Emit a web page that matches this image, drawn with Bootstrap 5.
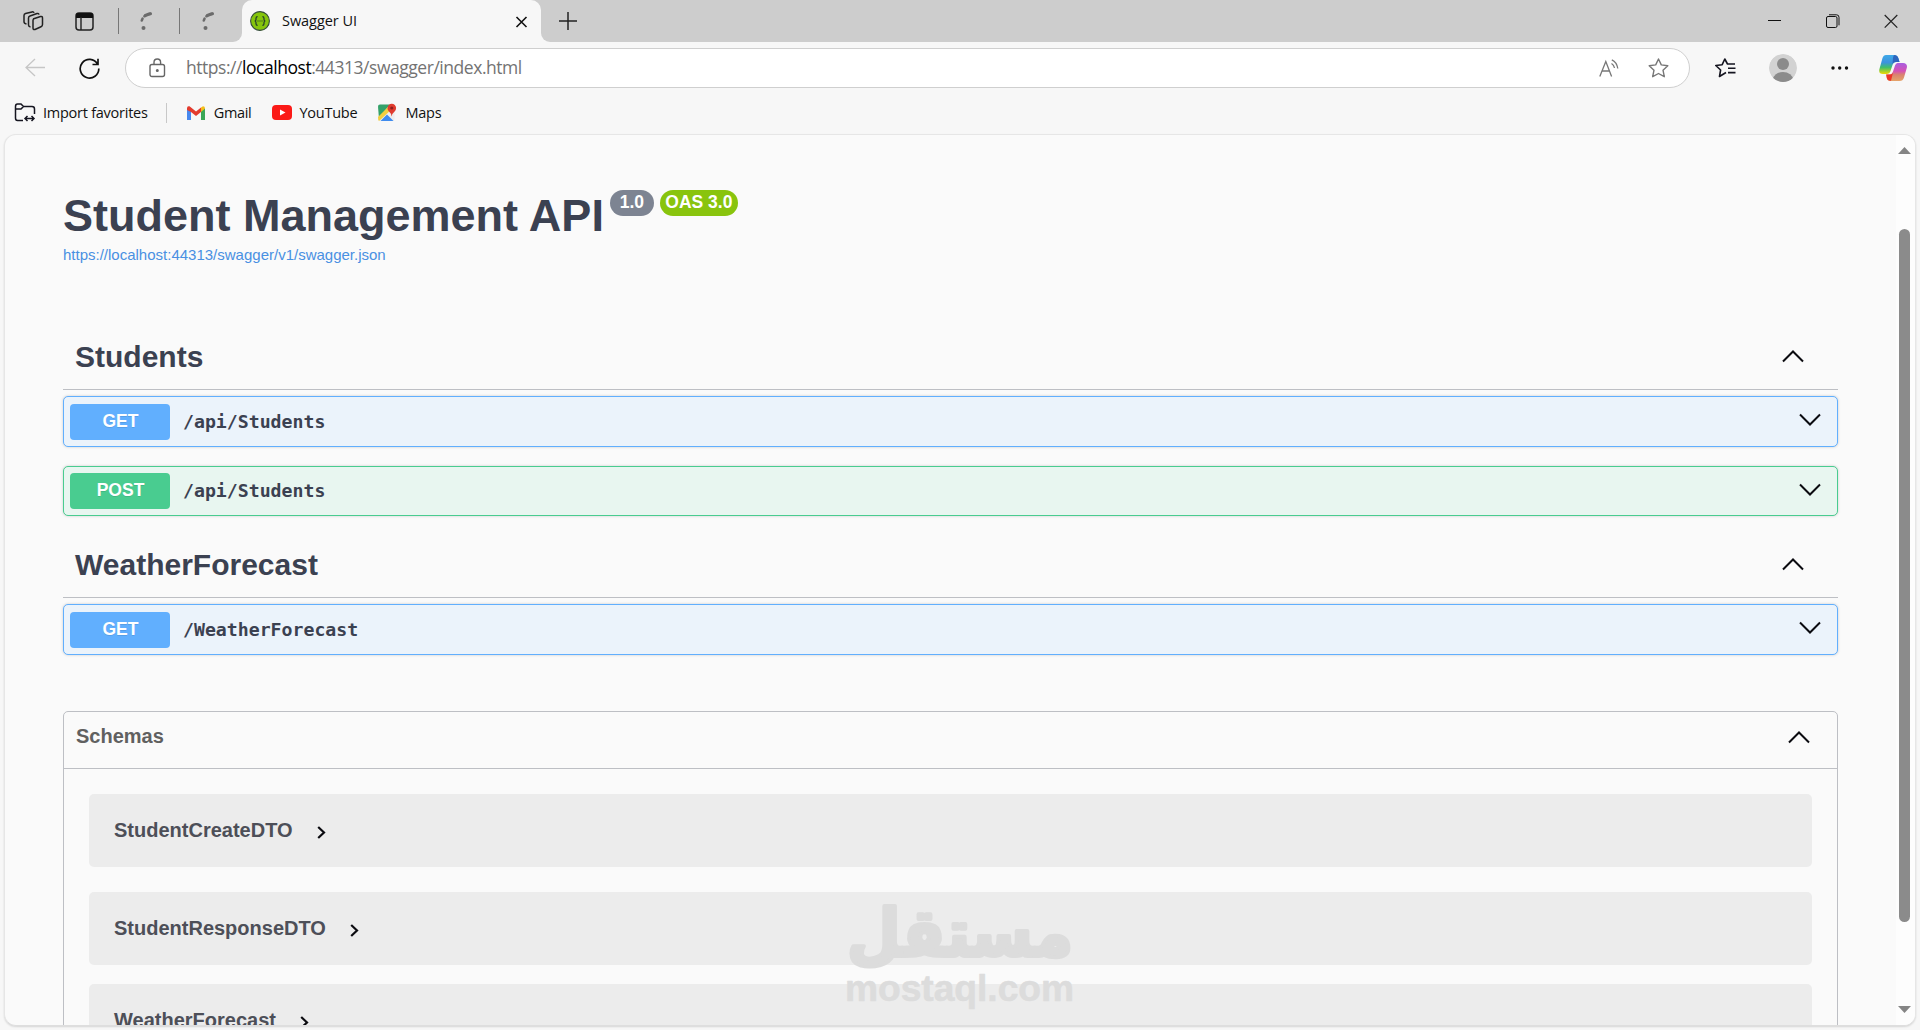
<!DOCTYPE html>
<html lang="en">
<head>
<meta charset="utf-8">
<title>Swagger UI</title>
<meta name="viewport" content="width=device-width, initial-scale=1">
<link href="https://cdn.jsdelivr.net/npm/bootstrap@5.3.0/dist/css/bootstrap.min.css" rel="stylesheet">
<style>
body{height:1030px;overflow:hidden;background:#f7f7f7;font-family:"Open Sans","Noto Sans",sans-serif;color:#111;line-height:1.2}
svg{display:block;flex:none}
.tabstrip{height:42px;background:#cdcdcd}
.strip-left{width:242px;background:#cdcdcd;border-bottom-right-radius:9px;padding-left:22px}
.strip-left .vr{width:1px;height:26px;background:#777;opacity:1;align-self:center}
.strip-bed{background:#f7f7f7}
.tab-active{width:299px;background:#f7f7f7;border-radius:10px 10px 0 0;padding:0 13px 0 8px}
.tab-title{font-size:14.5px;letter-spacing:-.05px;margin-left:12px}
.strip-right{background:#cdcdcd;border-bottom-left-radius:9px;padding-left:18px;padding-right:22px}
.toolbar{height:52px}
.address{width:1565px;height:40px;background:#fff;border:1px solid #cfcfcf;border-radius:20px;padding:0 20px 0 23px}
.url{font-size:17.5px;color:#737373;letter-spacing:-.46px;margin-left:20px;margin-bottom:2px}
.url b{font-weight:400;color:#000}
.favbar{height:40px;padding:0 0 3px 14px;font-size:14.5px}
.favbar .vr{width:1px;height:20px;background:#c8c8c8;opacity:1;align-self:center}
.page-frame{height:892px;margin:0 4px 0 4px;border:1px solid #e6e6e6;border-bottom:1px solid #dedede;border-radius:12px;background:#fafafa;overflow:hidden;box-shadow:0 1px 2px #0002}
.api-page{padding:54px 58px 0 58px;font-family:"Liberation Sans",Arial,sans-serif;color:#3b4151;overflow:hidden}
.scroll-rail{width:19px;background:#fdfdfd;padding:12px 2px 12px 0}
.scroll-thumb{width:11px;height:693px;border-radius:6px;background:#8b8b8b;margin-top:75px}
.api-title{font-size:45px;font-weight:700;line-height:54px;color:#3b4151;margin:0}
.pill{font-size:17.5px;font-weight:700;line-height:24px;height:26px;border-radius:13px;color:#fff;margin-top:1px;padding:0 5px}
.pill-version{background:#7d8492;margin-left:6px;width:44px;text-align:center}
.pill-oas{background:#89c40d;margin-left:6px;width:78px;text-align:center;white-space:nowrap}
.spec-link{font-size:15px;line-height:18px;color:#4990e2;text-decoration:none;margin-top:3px}
.tag-head{height:64px;border-bottom:1px solid #bdbfc4;padding:0 34px 1px 12px}
.tag-head h3{font-size:30px;font-weight:700;line-height:36px;margin:0}
.tag-head svg{margin-bottom:1px}
.op{height:51px;border:1px solid;border-radius:5px;padding:0 16px 0 6px;box-shadow:0 0 3px rgba(0,0,0,.19)}
.op-get{border-color:#61affe;background:#ebf3fb}
.op-post{border-color:#49cc90;background:#e8f6f0}
.method{width:100px;height:36px;border-radius:4px;color:#fff;font-size:17.5px;font-weight:700;line-height:34px;text-align:center;text-shadow:0 1px 0 rgba(0,0,0,.1);padding-left:1px}
.op-get .method{background:#61affe}
.op-post .method{background:#49cc90}
.op-path{font-family:"DejaVu Sans Mono",monospace;font-weight:700;font-size:18.2px;margin-left:13px}
.models{border:1px solid #bdbfc4;border-radius:5px;margin-top:56px;height:360px}
.models-head{height:57px;border-bottom:1px solid #bdbfc4;padding:0 27px 8px 12px;font-size:20px;font-weight:700;color:#606060}
.models-head svg{margin-top:2px}
.models-body{padding:25px 25px 0}
.model-row{height:73px;background:#ececec;border-radius:5px;padding:0 25px;font-size:20px;font-weight:700;color:#4d4f58}
.model-row span{margin-bottom:2px}
.model-row svg{margin:3px 0 0 24px}
.watermark{position:absolute;left:843px;top:896px}
</style>
<script src="https://cdn.jsdelivr.net/npm/bootstrap@5.3.0/dist/js/bootstrap.bundle.min.js"></script>
</head>
<body class="d-flex flex-column position-relative">

<svg width="0" height="0" class="position-absolute">
  <symbol id="up" viewBox="0 0 22 13"><path d="M1 11.5 11 1.5l10 10" fill="none" stroke="#0b0b10" stroke-width="2"/></symbol>
  <symbol id="down" viewBox="0 0 22 13"><path d="M1 1.500 11 11.500l10-10" fill="none" stroke="#0b0b10" stroke-width="2"/></symbol>
  <symbol id="next" viewBox="0 0 9 13"><path d="M1.200 1 7 6.500l-5.800 5.500" fill="none" stroke="#0b0b10" stroke-width="2.200"/></symbol>
  <symbol id="spin" viewBox="0 0 14 20"><path d="M2.800 9.500Q4.500 3.800 11 2.800" fill="none" stroke="#6b6b6b" stroke-width="2.600" stroke-linecap="round" stroke-dasharray="1.800 3.200"/><path d="M6.500 4.600Q8.500 3.200 11.500 2.700" fill="none" stroke="#6b6b6b" stroke-width="3" stroke-linecap="round"/><circle cx="4.500" cy="17" r="2" fill="#6b6b6b"/></symbol>
</svg>

<header class="flex-shrink-0">
  <div class="tabstrip d-flex">
    <div class="strip-bed"><div class="strip-left h-100 d-flex align-items-center">
      <svg width="23" height="20" viewBox="0 0 23 20" fill="none" stroke="#222" stroke-width="1.500" stroke-linejoin="round"><path d="M11 8 18.500 5.500Q20.500 5 20.500 7v6.500q0 1.500-1.500 2.200l-6 2.800q-2 .5-2-1.500V9.500Q11 8.300 12 7.700M8.500 16q-2-.3-2-2V7Q6.500 5.500 8 5l7-2.500q1.800-.4 2 1.200M4.500 13q-2.500-.5-2.500-2.200V4.500Q2 3 3.500 2.500L10 .9q1.700-.2 2 1"/></svg>
      <svg class="ms-auto" width="19" height="19" viewBox="0 0 19 19"><rect x="1" y="1" width="17" height="17" rx="3" fill="none" stroke="#222" stroke-width="1.500"/><path d="M1 6V3q0-2 2-2h13q2 0 2 2v3z" fill="#111"/><path d="M6 5v13" stroke="#222" stroke-width="1.400"/></svg>
      <div class="vr" style="margin-left:24px"></div>
      <svg width="14" height="20" style="margin-left:20px"><use href="#spin"/></svg>
      <div class="vr" style="margin-left:26px"></div>
      <svg width="14" height="20" style="margin-left:21px;margin-right:27px"><use href="#spin"/></svg>
    </div></div>
    <div><div class="tab-active h-100 d-flex align-items-center">
      <svg width="20" height="20" viewBox="0 0 20 20"><circle cx="10" cy="10" r="9.400" fill="#85c50c" stroke="#334b3c" stroke-width="1.100"/><path d="M7.600 5.600q-1.600 0-1.600 1.600v1.200q0 1.400-1.300 1.600 1.300.2 1.300 1.600v1.200q0 1.600 1.600 1.600m4.800-8.800q1.600 0 1.600 1.600v1.200q0 1.400 1.300 1.600-1.300.2-1.300 1.600v1.200q0 1.600-1.600 1.600" fill="none" stroke="#20392b" stroke-width="1.200"/><path d="M7.500 10h1m1 0h1m1 0h1" stroke="#20392b" stroke-width="1.200"/></svg>
      <span class="tab-title">Swagger UI</span>
      <svg class="ms-auto" width="13" height="13" viewBox="0 0 13 13"><path d="m1.500 2 10 10m0-10-10 10" stroke="#111" stroke-width="1.600"/></svg>
    </div></div>
    <div class="strip-bed flex-grow-1"><div class="strip-right h-100 d-flex align-items-center">
      <svg width="18" height="18" viewBox="0 0 18 18"><path d="M9 0v18M0 9h18" stroke="#222" stroke-width="1.500"/></svg>
      <svg class="ms-auto" width="14" height="14" viewBox="0 0 14 14"><path d="M0 6.500h13" stroke="#111"/></svg>
      <svg width="14" height="14" viewBox="0 0 14 14" fill="none" stroke="#111" style="margin-left:44px"><rect x=".5" y="2.500" width="10.500" height="11" rx="1.500"/><path d="M3 .8h7.500q2.500 0 2.500 2.500v8"/></svg>
      <svg width="14" height="14" viewBox="0 0 14 14" style="margin-left:44px"><path d="m.7 1 12.600 12.600m0-12.600L.7 13.600" stroke="#222" stroke-width="1.200"/></svg>
    </div></div>
  </div>

  <div class="toolbar d-flex align-items-center">
    <svg width="21" height="19" viewBox="0 0 21 19" style="margin:0 0 1px 25px"><path d="M20 9.500H1M10 1 1 9.500l9 8.500" fill="none" stroke="#c6c6c6" stroke-width="1.300"/></svg>
    <svg width="21" height="21" viewBox="0 0 21 21" style="margin-left:33px"><path d="M18.500 6A9.300 9.300 0 1 0 19.800 10.500M19 .8V6.500h-5.500" fill="none" stroke="#111" stroke-width="1.700"/></svg>
    <div class="address d-flex align-items-center" style="margin-left:25px">
      <svg width="17" height="20" viewBox="0 0 17 20" fill="none" stroke="#666" stroke-width="1.400"><rect x="1" y="6.500" width="14.500" height="12" rx="2"/><path d="M5 6.500V4.500q0-3.500 3.300-3.500t3.300 3.500v2"/><circle cx="8.300" cy="12.500" r=".8" fill="#666"/></svg>
      <span class="url">https://<b>localhost</b>:44313/swagger/index.html</span>
      <svg class="ms-auto" width="20" height="19" viewBox="0 0 20 19" fill="none" stroke="#777" stroke-width="1.300"><path d="M.8 17.500 6.800 2.500l5.800 15M2.800 12h7.900M12.500 4.500q2.500 1.500 3 4.500M12.800.8q5 2.200 6 8.700"/></svg>
      <svg width="21" height="20" viewBox="0 0 21 20" style="margin-left:29px"><path d="m10.500 1 2.800 5.900 6.500.8-4.800 4.500 1.300 6.500-5.800-3.200-5.800 3.200 1.300-6.500-4.800-4.500 6.500-.8z" fill="none" stroke="#777" stroke-width="1.400" stroke-linejoin="round"/></svg>
    </div>
    <svg width="21" height="20" viewBox="0 0 21 20" style="margin-left:25px" fill="none" stroke="#151520" stroke-width="1.600" stroke-linejoin="round"><path d="M11 14.500 4.500 18.500 5.600 12 .8 7.500l6.400-.8L9.800 1l2.700 5H20M13 10.200h7.500M13 14.600h7.500"/></svg>
    <svg width="28" height="28" viewBox="0 0 28 28" style="margin-left:33px"><defs><clipPath id="av"><circle cx="14" cy="14" r="14"/></clipPath></defs><g clip-path="url(#av)"><circle cx="14" cy="14" r="14" fill="#d2d2d2"/><circle cx="14" cy="10" r="6" fill="#8b8b8b"/><ellipse cx="14" cy="25.500" rx="10" ry="7.500" fill="#8b8b8b"/></g></svg>
    <svg width="18" height="4" viewBox="0 0 18 4" style="margin-left:34px"><g fill="#111"><circle cx="2" cy="2" r="1.700"/><circle cx="8.700" cy="2" r="1.700"/><circle cx="15.500" cy="2" r="1.700"/></g></svg>
    <svg width="28" height="26" viewBox="0 0 28 26" style="margin-left:30px">
      <defs><linearGradient id="cl" x1="0" y1="0" x2="0" y2="1"><stop offset="0" stop-color="#3fa9e8"/><stop offset=".4" stop-color="#3c93dd"/><stop offset=".65" stop-color="#3ebf6b"/><stop offset="1" stop-color="#f0d800"/></linearGradient><linearGradient id="cr" x1="0" y1="0" x2="0" y2="1"><stop offset="0" stop-color="#a85ee0"/><stop offset=".45" stop-color="#d651b5"/><stop offset=".65" stop-color="#d98370"/><stop offset="1" stop-color="#e5a469"/></linearGradient></defs>
      <path d="M7 0h8q3.500 0 4.500 3.500L20.500 7H17q-2.500 0-3.500 3l-2 6q-.8 3-4 3H4q-4.500 0-3.700-4.500L3.500 3Q4.500 0 7 0z" fill="url(#cl)"/>
      <path d="M15 0q3.500 0 4.300 3L20.500 7H17q-2.500 0-3.500 2l.5-6q.3-2 1-3z" fill="#2e66bd"/>
      <path d="M18.500 8H24q4.500 0 3.900 4.500L25 22.500Q24 26 20.500 26H11q-2.500 0-3.200-3L7 19.500h3.500q2.500 0 3.500-3l2-6q.8-2.500 2.500-2.500z" fill="url(#cr)"/>
      <path d="M7.300 19.500h4q2 0 2.700-2L12 25.700Q8.500 26 7.800 23z" fill="#ee3428"/>
    </svg>
  </div>

  <nav class="favbar d-flex align-items-center">
    <svg width="22" height="19" viewBox="0 0 22 19" fill="none" stroke="#151520" stroke-width="1.500" style="margin-bottom:1px"><path d="M9 17.500H3.500Q1.500 17.500 1.500 15V3.500Q1.500 1 3.500 1H7l2.500 2.500H18q2.500 0 2.500 2.500v5M1.500 6H7l2.500-2.500M11 15.500h9M13.500 13 11 15.500l2.500 2.500M17.500 13l2.500 2.500-2.500 2.500"/></svg>
    <span style="margin-left:7px;letter-spacing:-.25px">Import favorites</span>
    <div class="vr" style="margin-left:18px"></div>
    <svg width="18" height="14" viewBox="0 0 18 14" style="margin-left:20px"><path d="M0 2v12h4V5z" fill="#4788ee"/><path d="M14 5v9h4V2z" fill="#3aa757"/><path d="m14 1.500 2-1.300q2 0 2 2.300L14 6z" fill="#f5bd18"/><path d="M0 2.500Q0-.5 2.500.3L9 5.500l5-4V6L9 10 4 6 0 4z" fill="#e33b2e"/></svg>
    <span style="margin-left:9px;letter-spacing:-.3px">Gmail</span>
    <svg width="20" height="15" viewBox="0 0 20 15" style="margin-left:20px"><rect width="20" height="15" rx="4" fill="#fb1a17"/><path d="m8 4.500 5.500 3L8 10.500z" fill="#fff"/></svg>
    <span style="margin-left:8px;letter-spacing:-.25px">YouTube</span>
    <svg width="19" height="19" viewBox="0 0 19 19" style="margin-left:21px;margin-top:-1px"><rect y="1.500" width="16.500" height="16.500" rx="2" fill="#eee"/><path d="M0 3.500q0-2 2-2h10L1 15z" fill="#34a26a"/><path d="M0 14 12 2l2 4L1 18q-1-1-1-4z" fill="#f3cf3f"/><path d="m2.500 18 6.500-6.500 6.500 6.500z" fill="#3f8bee"/><path d="M13.500 13.500q0-3-2.500-5-1.500-1.500-1.500-3.500a4.300 4.300 0 0 1 8.600 0q0 2-1.500 3.500-2.500 2-3.100 5z" fill="#e03c2f"/><circle cx="13.800" cy="5" r="1.600" fill="#8e1e1e"/></svg>
    <span style="margin-left:8px;letter-spacing:-.2px">Maps</span>
  </nav>
</header>

<div class="page-frame d-flex flex-shrink-0">
  <main class="api-page flex-grow-1">
    <div class="d-flex align-items-start">
      <h1 class="api-title">Student Management API</h1>
      <span class="pill pill-version">1.0</span>
      <span class="pill pill-oas">OAS 3.0</span>
    </div>
    <a class="spec-link d-block" href="#">https://localhost:44313/swagger/v1/swagger.json</a>

    <section style="margin-top:62px">
      <div class="tag-head d-flex align-items-center"><h3>Students</h3><svg class="ms-auto" width="22" height="13"><use href="#up"/></svg></div>
      <div class="op op-get d-flex align-items-center" style="margin-top:6px"><span class="method">GET</span><span class="op-path">/api/Students</span><svg class="ms-auto mb-1" width="22" height="13"><use href="#down"/></svg></div>
      <div class="op op-post d-flex align-items-center" style="margin-top:19px;height:50px"><span class="method">POST</span><span class="op-path">/api/Students</span><svg class="ms-auto mb-1" width="22" height="13"><use href="#down"/></svg></div>
    </section>
    <section style="margin-top:18px">
      <div class="tag-head d-flex align-items-center"><h3>WeatherForecast</h3><svg class="ms-auto" width="22" height="13"><use href="#up"/></svg></div>
      <div class="op op-get d-flex align-items-center" style="margin-top:6px"><span class="method">GET</span><span class="op-path">/WeatherForecast</span><svg class="ms-auto mb-1" width="22" height="13"><use href="#down"/></svg></div>
    </section>

    <section class="models">
      <div class="models-head d-flex align-items-center"><span>Schemas</span><svg class="ms-auto" width="22" height="13"><use href="#up"/></svg></div>
      <div class="models-body">
        <div class="model-row d-flex align-items-center" style="margin-bottom:25px"><span>StudentCreateDTO</span><svg width="9" height="13"><use href="#next"/></svg></div>
        <div class="model-row d-flex align-items-center" style="margin-bottom:19px"><span>StudentResponseDTO</span><svg width="9" height="13"><use href="#next"/></svg></div>
        <div class="model-row d-flex align-items-center"><span>WeatherForecast</span><svg width="9" height="13"><use href="#next"/></svg></div>
      </div>
    </section>
  </main>
  <aside class="scroll-rail d-flex flex-column align-items-center flex-shrink-0">
    <svg width="13" height="7" viewBox="0 0 13 7"><path d="m0 7 6.500-7L13 7z" fill="#858585"/></svg>
    <div class="scroll-thumb"></div>
    <svg class="mt-auto" width="13" height="7" viewBox="0 0 13 7"><path d="m0 0 6.500 7L13 0z" fill="#858585"/></svg>
  </aside>
</div>

<svg class="watermark" width="236" height="118" viewBox="0 0 236 118" fill="#dcdcdc">
  <text x="4" y="60" textLength="226" lengthAdjust="spacingAndGlyphs" font-family="DejaVu Sans" font-weight="700" font-size="66" stroke="#dcdcdc" stroke-width="4" stroke-linejoin="round">مستقل</text>
  <text x="2" y="104.500" textLength="229" lengthAdjust="spacingAndGlyphs" font-family="Liberation Sans" font-weight="700" font-size="36" stroke="#dcdcdc" stroke-width=".6" stroke-linejoin="round">mostaql.com</text>
</svg>
</body>
</html>
